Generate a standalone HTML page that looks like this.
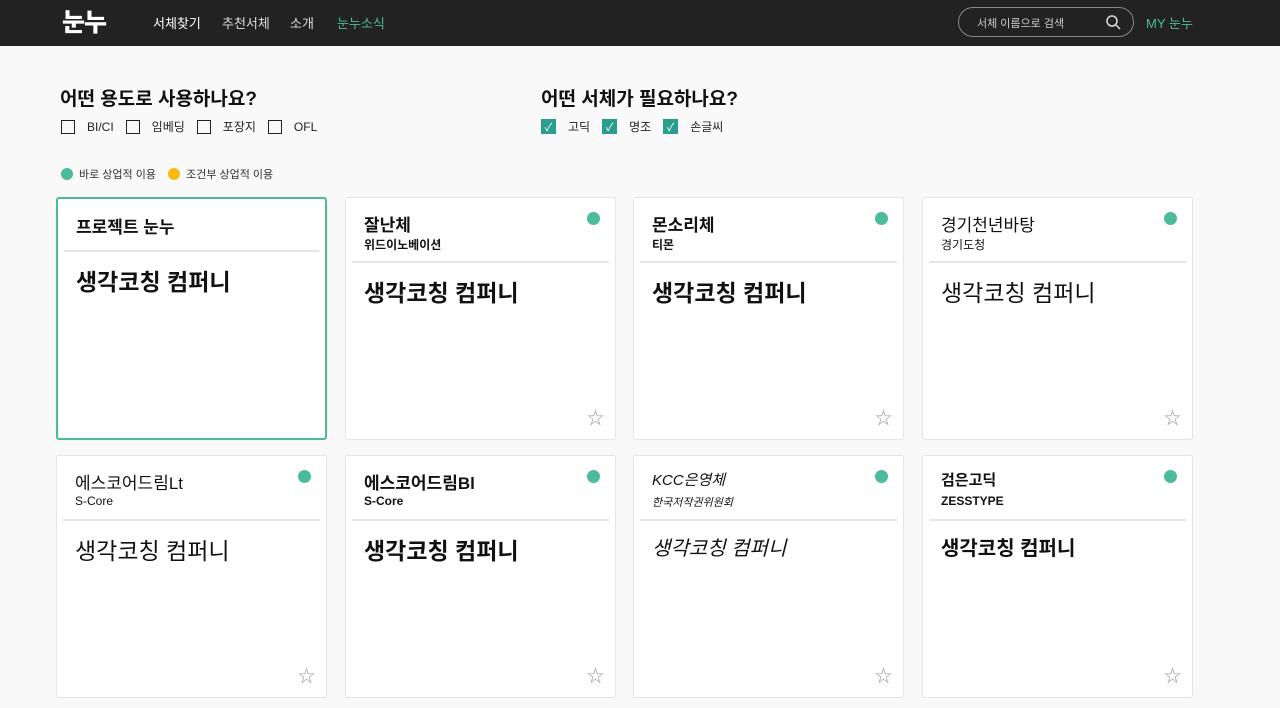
<!DOCTYPE html>
<html><head><meta charset="utf-8"><style>
*{box-sizing:border-box;margin:0;padding:0}
body{width:1280px;height:708px;overflow:hidden;background:#f9f9f9;font-family:"Liberation Sans","Noto Sans CJK KR",sans-serif;color:#111}
.nav{height:46px;background:#222;position:relative;color:#ddd;font-size:13px}
.nav .logo{position:absolute;left:62px;top:3px;font-size:25px;font-weight:900;color:#fff;letter-spacing:-1px}
.nav a{position:absolute;top:13px}
.search{position:absolute;left:958px;top:7px;width:176px;height:30px;border:1px solid #888;border-radius:15px;font-size:11px;color:#ccc;padding:7px 0 0 18px}
.h{position:absolute;font-size:19px;font-weight:700}
.cb{position:absolute;top:118px;font-size:12px;display:flex;align-items:center;gap:12px;color:#222}
.box{width:14px;height:14px;border:1.5px solid #222;display:inline-block}
.chk{width:15px;height:15px;background:#2a9d8f;display:inline-flex;align-items:center;justify-content:center;color:#fff;font-size:11px}
.card{position:absolute;width:271px;height:243px;background:#fff;border:1px solid #e4e4e4;border-radius:3px}
.card .t{position:absolute;left:18px;top:13px;font-size:17px;font-weight:700}
.card .s{position:absolute;left:18px;top:38px;font-size:12px;font-weight:700}
.card .ln{position:absolute;left:6px;right:6px;top:63px;border-top:2px solid #e5e5e5}
.card .p{position:absolute;left:18px;top:76px;font-size:23px;font-weight:700}
.dot{position:absolute;right:15px;top:14px;width:13px;height:13px;border-radius:50%;background:#4bbb9c}
.star{position:absolute;right:11px;bottom:10px;font-size:17px;color:#999}
.light .t,.light .p{font-weight:400}
.light .s{font-weight:400}
</style></head><body>
<div class="nav">
<div class="logo">눈누</div>
<a style="left:153px;color:#fff">서체찾기</a><a style="left:222px">추천서체</a><a style="left:290px">소개</a><a style="left:337px;color:#4bbb9c">눈누소식</a>
<div class="search">서체 이름으로 검색<svg style="position:absolute;right:12px;top:7px" width="15" height="15" viewBox="0 0 15 15"><circle cx="6" cy="6" r="5" stroke="#ddd" stroke-width="1.5" fill="none"/><path d="M10 10l4 4" stroke="#ddd" stroke-width="1.5"/></svg></div>
<a style="left:1146px;color:#4bbb9c">MY 눈누</a>
</div>
<div class="h" style="left:60px;top:84px">어떤 용도로 사용하나요?</div>
<div class="h" style="left:541px;top:84px">어떤 서체가 필요하나요?</div>
<div class="cb" style="left:61px"><span class="box"></span>BI/CI <span class="box"></span>임베딩 <span class="box"></span>포장지 <span class="box"></span>OFL</div>
<div class="cb" style="left:541px"><span class="chk">✓</span>고딕 <span class="chk">✓</span>명조 <span class="chk">✓</span>손글씨</div>
<div style="position:absolute;left:61px;top:166px;font-size:11px;display:flex;align-items:center;gap:6px;color:#333"><span style="width:12px;height:12px;border-radius:50%;background:#4bbb9c"></span>바로 상업적 이용 &nbsp;<span style="width:12px;height:12px;border-radius:50%;background:#fdb813"></span>조건부 상업적 이용</div>

<div class="card" style="left:56px;top:197px;border:2px solid #4bbb9c"><div class="t" style="top:14px">프로젝트 눈누</div><div class="ln" style="top:51px"></div><div class="p" style="top:64px">생각코칭 컴퍼니</div></div>
<div class="card" style="left:345px;top:197px"><div class="t">잘난체</div><div class="s">위드이노베이션</div><div class="dot"></div><div class="ln"></div><div class="p">생각코칭 컴퍼니</div><div class="star">☆</div></div>
<div class="card" style="left:633px;top:197px"><div class="t">몬소리체</div><div class="s">티몬</div><div class="dot"></div><div class="ln"></div><div class="p">생각코칭 컴퍼니</div><div class="star">☆</div></div>
<div class="card light" style="left:922px;top:197px"><div class="t">경기천년바탕</div><div class="s">경기도청</div><div class="dot"></div><div class="ln"></div><div class="p">생각코칭 컴퍼니</div><div class="star">☆</div></div>
<div class="card light" style="left:56px;top:455px"><div class="t">에스코어드림Lt</div><div class="s">S-Core</div><div class="dot"></div><div class="ln"></div><div class="p">생각코칭 컴퍼니</div><div class="star">☆</div></div>
<div class="card" style="left:345px;top:455px"><div class="t">에스코어드림Bl</div><div class="s">S-Core</div><div class="dot"></div><div class="ln"></div><div class="p">생각코칭 컴퍼니</div><div class="star">☆</div></div>
<div class="card light" style="left:633px;top:455px"><div class="t" style="font-style:italic;font-size:15px">KCC은영체</div><div class="s" style="font-size:11px;font-style:italic">한국저작권위원회</div><div class="dot"></div><div class="ln"></div><div class="p" style="font-style:italic;font-size:20px">생각코칭 컴퍼니</div><div class="star">☆</div></div>
<div class="card" style="left:922px;top:455px"><div class="t" style="font-size:15px">검은고딕</div><div class="s">ZESSTYPE</div><div class="dot"></div><div class="ln"></div><div class="p" style="font-size:20px">생각코칭 컴퍼니</div><div class="star">☆</div></div>
</body></html>
